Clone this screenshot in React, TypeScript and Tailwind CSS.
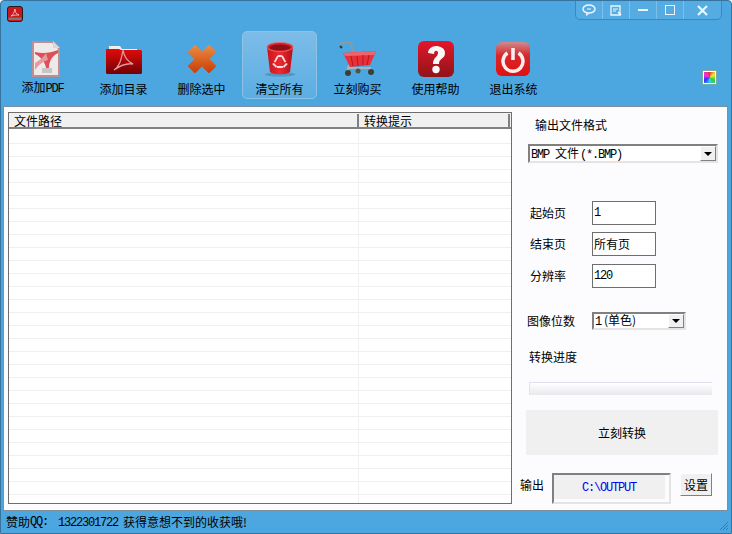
import type { ReactNode } from 'react'

const cjk = "font-['Noto_Sans_CJK_SC',sans-serif]"
const bevel = 'border-2 border-t-[#808080] border-l-[#808080] border-r-[#e4e4e4] border-b-[#e4e4e4]'

// SimSun latin is 6px wide at 12px, Liberation Mono squeezed to match
function L({ children }: { children: ReactNode }) {
  return <span className="font-['Liberation_Mono',monospace] text-[12px] tracking-[-1.2px]">{children}</span>
}

function AppIcon() {
  return (
    <svg width="16" height="16" viewBox="0 0 16 16">
      <rect x="0.5" y="0.5" width="15" height="15" rx="2.5" fill="#c9171e" stroke="#2a1a1a" />
      <rect x="1.5" y="11.500" width="13" height="2.500" fill="#7d7577" />
      <path d="M4 10c2-1 3-3 4-7 0 3 1 5 4 6-2 0-5 0-8 1z" fill="none" stroke="#f6d5d5" strokeWidth="0.8" />
    </svg>
  )
}

function PdfIcon() {
  return (
    <svg width="36" height="36" viewBox="-2 0 36 36">
      <path d="M5 0h21l7 7v29H5z" fill="#bd8f92" />
      <path d="M7 2h18l6 6v26H7z" fill="#efeaea" />
      <path d="M26 0v7h7z" fill="#ddd6d6" />
      <path d="M8 11c8 2 15 1 23-2v3c-6 3-10 8-9 20h-2c-1-9-4-15-12-19z" fill="#de5056" />
      <path d="M8 22c5-3 9-6 11-10l2 7c-4 1-9 4-13 10z" fill="#e79a9c" />
      <rect x="15" y="27" width="10" height="5" fill="#c9c5c5" />
    </svg>
  )
}

function FolderIcon() {
  return (
    <svg width="36" height="36" viewBox="0 0 36 36">
      <defs>
        <linearGradient id="fold" x1="0" y1="0" x2="0" y2="1">
          <stop offset="0" stopColor="#e50a0a" />
          <stop offset="1" stopColor="#6f0205" />
        </linearGradient>
      </defs>
      <path d="M3 5h11l2 3h15v4H3z" fill="#f1eeee" />
      <path d="M0 8h13l2 1h20l1 1v22l-1 1H1l-1-1z" fill="url(#fold)" />
      <path d="M8 29c5-3 7-9 9-20 1 7 4 11 10 14-6-1-12 1-19 6z" fill="none" stroke="#e09a9a" strokeWidth="1.3" />
    </svg>
  )
}

function DeleteIcon() {
  return (
    <svg width="36" height="36" viewBox="0 0 36 36">
      <defs>
        <linearGradient id="del" gradientUnits="userSpaceOnUse" x1="0" y1="5" x2="0" y2="31">
          <stop offset="0" stopColor="#ea8a42" />
          <stop offset="1" stopColor="#cb3f06" />
        </linearGradient>
      </defs>
      <path d="M11 5l7 7 7-7 6 6-7 7 7 7-6 6-7-7-7 7-6-6 7-7-7-7z" fill="url(#del)" stroke="url(#del)" strokeWidth="2" strokeLinejoin="round" />
    </svg>
  )
}

function TrashIcon() {
  return (
    <svg width="36" height="36" viewBox="0 0 36 36">
      <defs>
        <linearGradient id="bin" x1="0" y1="0" x2="1" y2="0">
          <stop offset="0" stopColor="#c8141c" />
          <stop offset="0.5" stopColor="#ee2a30" />
          <stop offset="1" stopColor="#b50f16" />
        </linearGradient>
      </defs>
      <ellipse cx="18" cy="33.500" rx="15" ry="2" fill="#3b6f96" opacity="0.45" />
      <path d="M5 6l3 25c3 3 17 3 20 0l3-25z" fill="url(#bin)" />
      <ellipse cx="18" cy="6" rx="13" ry="4.500" fill="#d8232a" stroke="#f0686c" strokeWidth="0.8" />
      <ellipse cx="18" cy="6.500" rx="10.500" ry="3" fill="#8c1015" />
      <path d="M16 15l-4.500 8 3 3M20 15l4.500 8-3 3M16 15h4M15 26h6" stroke="#f7dede" strokeWidth="1.800" fill="none" strokeDasharray="7 1.500" />
    </svg>
  )
}

function CartIcon() {
  return (
    <svg width="38" height="36" viewBox="0 0 38 36">
      <path d="M1 5l2-3 7-1 2 2 3 9" stroke="#8f9a9e" strokeWidth="2" fill="none" />
      <path d="M1 5l2 2" stroke="#333" strokeWidth="2" />
      <path d="M9 27h22l2 4M9 27l-1 5M10 24l-1 3" stroke="#a9b4b8" strokeWidth="2" fill="none" />
      <path d="M4 12l33-2-6 14-20 2z" fill="#e8303a" />
      <path d="M4 12l33-2-2 4-29 1z" fill="#f2646b" />
      <path d="M12 15l2 10M18 15l1 10M24 14l0 10M30 14l-2 10" stroke="#b8161f" strokeWidth="1" />
      <circle cx="9" cy="32" r="3" fill="#3a3f3a" />
      <circle cx="32" cy="31" r="3" fill="#3a3f3a" />
      <circle cx="19" cy="30" r="2.500" fill="#4d524d" />
    </svg>
  )
}

function HelpIcon() {
  return (
    <svg width="36" height="36" viewBox="0 0 36 36">
      <defs>
        <linearGradient id="hlp" x1="0" y1="0" x2="0" y2="1">
          <stop offset="0" stopColor="#e4162a" />
          <stop offset="1" stopColor="#8f1418" />
        </linearGradient>
      </defs>
      <rect width="36" height="36" rx="6" fill="url(#hlp)" />
      <path d="M10 12c0-4 4-7 8-7s9 2 9 7c0 6-6 5-6 11h-6c0-7 5-7 5-11 0-3-4-3-4 1z" fill="#fbf5f5" />
      <circle cx="18" cy="28.500" r="3.700" fill="#fbf5f5" />
    </svg>
  )
}

function PowerIcon() {
  return (
    <svg width="36" height="36" viewBox="1 0 36 36">
      <defs>
        <linearGradient id="pwr" x1="0" y1="0" x2="0" y2="1">
          <stop offset="0" stopColor="#d08a8c" />
          <stop offset="0.4" stopColor="#d5282c" />
          <stop offset="1" stopColor="#e2100f" />
        </linearGradient>
      </defs>
      <rect width="34" height="34" x="1" y="1" rx="6" fill="url(#pwr)" />
      <path d="M12.500 12a10 10 0 1 0 11 0" fill="none" stroke="#fbeeee" strokeWidth="3.500" />
      <path d="M18 7v12" stroke="#fbeeee" strokeWidth="3.600" />
    </svg>
  )
}

function ToolButton({ label, active, first, children }: { label: ReactNode; active?: boolean; first?: boolean; children: ReactNode }) {
  return (
    <div
      className={
        'flex h-[68px] w-[75px] flex-col items-center justify-between rounded-[5px] border pt-[9px] pb-[1px] ' +
        (first ? 'mr-[6px] ' : 'mr-[3px] ') +
        (active ? 'border-[#8fc3e6] bg-gradient-to-b from-[#7dbce8] to-[#5aaee3]' : 'border-transparent')
      }
    >
      <div className="flex h-[36px] items-center justify-center">{children}</div>
      <div className="whitespace-nowrap text-[12px] leading-[16px] text-black">{label}</div>
    </div>
  )
}

function ArrowBox() {
  return (
    <div className="flex h-full w-[16px] items-center justify-center border border-t-white border-r-[#808080] border-b-[#808080] border-l-white bg-[#f0f0f0]">
      <div className="h-0 w-0 border-x-[4px] border-t-[4px] border-x-transparent border-t-black" />
    </div>
  )
}

function PageField({ label, value, mb }: { label: string; value: ReactNode; mb: string }) {
  return (
    <div className={'flex items-center ' + mb}>
      <div className="w-[80px] pl-[18px] text-[12px] whitespace-nowrap">{label}</div>
      <div className="flex h-[24px] w-[64px] items-center border border-[#6e6e6e] bg-white pl-[1px] text-[12px]">{value}</div>
    </div>
  )
}

export default function App() {
  const rows = Array.from({ length: 29 })

  return (
    <div className={'relative flex h-[534px] w-[732px] flex-col overflow-hidden rounded-t-[4px] border border-[#37739f] bg-[#4ca6df] text-black ' + cjk}>
      {/* title bar */}
      <div className="flex h-[30px] items-start justify-between">
        <div className="mt-[5px] ml-[6px]"><AppIcon /></div>
        <div className="-mt-px mr-[9px] flex h-[20px] w-[147px] items-center rounded-b-[5px] border border-[#3f86b9] bg-[#54ace3]">
          <div className="flex h-full w-[27px] items-center justify-center border-r border-[#7cc0ea]">
            <svg width="14" height="12" viewBox="0 0 14 12"><ellipse cx="7" cy="5" rx="6" ry="4" fill="none" stroke="#eef7fd" strokeWidth="1.500" /><path d="M4 9l0 3 3-2" fill="#eef7fd" /><path d="M5 5h4" stroke="#eef7fd" /></svg>
          </div>
          <div className="flex h-full w-[27px] items-center justify-center border-r border-[#7cc0ea]">
            <svg width="12" height="11" viewBox="0 0 12 11"><path d="M1 1h9v9H1z" fill="none" stroke="#eef7fd" strokeWidth="1.300" /><path d="M3 4h5M3 6h3" stroke="#eef7fd" /><path d="M8 7l3 3" stroke="#eef7fd" strokeWidth="1.500" /></svg>
          </div>
          <div className="flex h-full w-[27px] items-center justify-center border-r border-[#7cc0ea]">
            <div className="h-[2px] w-[10px] bg-[#eef7fd]" />
          </div>
          <div className="flex h-full w-[27px] items-center justify-center border-r border-[#7cc0ea]">
            <div className="h-[10px] w-[10px] border border-[#eef7fd]" />
          </div>
          <div className="flex h-full flex-1 items-center justify-center">
            <svg width="11" height="11" viewBox="0 0 11 11"><path d="M1 1l9 9M10 1l-9 9" stroke="#eef7fd" strokeWidth="2.200" /></svg>
          </div>
        </div>
      </div>

      {/* toolbar */}
      <div className="relative flex h-[75px] items-start pl-[4px]">
        <ToolButton first label={<>添加<L>PDF</L></>}><PdfIcon /></ToolButton>
        <ToolButton label="添加目录"><FolderIcon /></ToolButton>
        <ToolButton label="删除选中"><DeleteIcon /></ToolButton>
        <ToolButton label="清空所有" active><TrashIcon /></ToolButton>
        <ToolButton label="立刻购买"><CartIcon /></ToolButton>
        <ToolButton label="使用帮助"><HelpIcon /></ToolButton>
        <ToolButton label="退出系统"><PowerIcon /></ToolButton>
        <div className="absolute top-[40px] left-[702px] h-[13px] w-[13px] border border-white bg-[conic-gradient(#e33,#ee3,#3c3,#3cf,#33e,#e3e,#e33)] shadow-[0_0_0_1px_#7aa]" />
      </div>

      {/* body */}
      <div className="mx-[2px] flex h-[405px] w-[725px] border border-[#7d8f9c] bg-[#fcfcff]">
        {/* list */}
        <div className="mt-[5px] ml-[4px] flex h-[392px] w-[504px] flex-col overflow-hidden border border-[#6e6e6e] bg-white">
          <div className="flex h-[16px] shrink-0 border-b-2 border-[#808080] bg-[#f0f0f0] pt-[1px] text-[12px] leading-[14px]">
            <div className="w-[350px] border-r-2 border-[#808080] pl-[5px]">文件路径</div>
            <div className="w-[151px] border-r-2 border-[#808080] pl-[5px]">转换提示</div>
          </div>
          <div className="mt-[2px]">
            {rows.map((_, i) => (
              <div key={i} className="flex h-[13px] border-b border-[#f0f0f0]">
                <div className="w-[350px] border-r border-[#f0f0f0]" />
              </div>
            ))}
          </div>
        </div>

        {/* settings */}
        <div className="flex flex-1 flex-col pt-[10px]">
          <div className="ml-[23px] text-[12px] leading-[16px]">输出文件格式</div>
          <div className={'mt-[11px] ml-[16px] flex h-[19px] w-[190px] items-center justify-between bg-white pl-[1px] text-[12px] ' + bevel}>
            <span><L>BMP</L><span className="ml-[6px]">文件</span><span className="ml-[1px]"><L>(*.BMP)</L></span></span>
            <ArrowBox />
          </div>

          <div className="mt-[38px]">
            <PageField label="起始页" value={<L>1</L>} mb="mb-[7px]" />
            <PageField label="结束页" value="所有页" mb="mb-[8px]" />
            <PageField label="分辨率" value={<L>120</L>} mb="" />
          </div>

          <div className="mt-[24px] flex items-center">
            <div className="w-[80px] pl-[15px] text-[12px] whitespace-nowrap">图像位数</div>
            <div className={'flex h-[18px] w-[94px] items-center justify-between bg-white pl-[1px] text-[12px] ' + bevel}>
              <span><L>1</L><span className="ml-[3px]">(单色)</span></span>
              <ArrowBox />
            </div>
          </div>

          <div className="mt-[19px] ml-[17px] text-[12px] leading-[16px]">转换进度</div>
          <div className="mt-[17px] ml-[17px] h-[13px] w-[183px] border-t border-l border-[#e0e0ee] bg-gradient-to-b from-white to-[#e8e8ee]" />

          <div className="mt-[15px] ml-[14px] flex h-[45px] w-[192px] items-center justify-center bg-[#f0f0f0] text-[12px]">立刻转换</div>

          <div className="mt-[18px] flex items-start">
            <div className="ml-[8px] w-[32px] pt-[3px] text-[12px]">输出</div>
            <div className="h-[31px] w-[119px] border-2 border-t-[#808080] border-r-[#e4e4e4] border-b-[#e4e4e4] border-l-[#808080] bg-[#fcfcff]">
              <div className="flex h-[24px] w-[111px] items-center justify-center bg-[#f0f0f0] pt-[1px] pr-[1px] text-[#0000ee]"><L>C:\OUTPUT</L></div>
            </div>
            <div className="ml-[9px] flex h-[23px] w-[32px] items-center justify-center border border-t-white border-r-[#808080] border-b-[#808080] border-l-white bg-[#f0f0f0] text-[12px]">设置</div>
          </div>
        </div>
      </div>

      {/* status bar */}
      <div className="relative flex h-[22px] items-center pl-[5px] text-[12px] whitespace-nowrap">
        赞助<L>QQ:</L><span className="ml-[10px]"><L>1322301722</L></span><span className="ml-[5px]">获得意想不到的收获哦!</span>
        <svg className="absolute right-[2px] bottom-[2px]" width="11" height="11" viewBox="0 0 11 11">
          <path d="M10 2L2 10M10 5L5 10M10 8L8 10" stroke="#2f7fb3" strokeWidth="1" />
        </svg>
      </div>
    </div>
  )
}
